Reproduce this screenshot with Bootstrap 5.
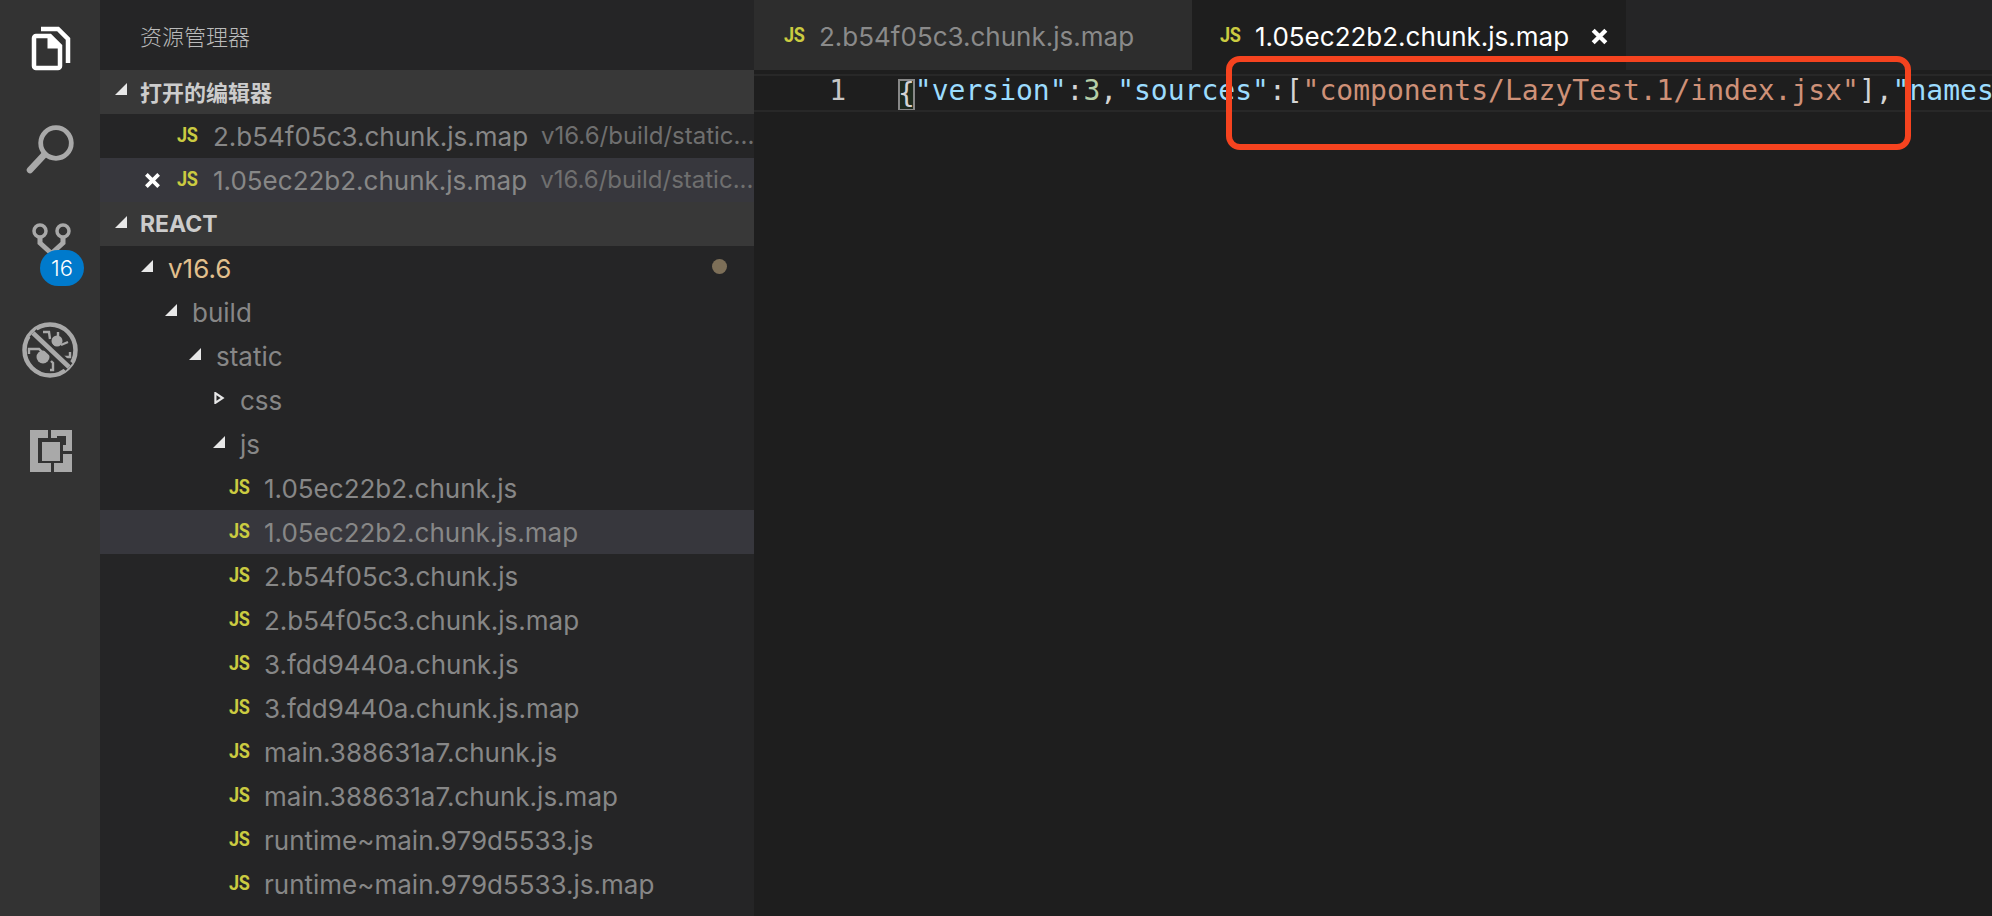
<!DOCTYPE html>
<html lang="zh">
<head>
<meta charset="utf-8">
<link href="https://cdn.jsdelivr.net/npm/bootstrap@5.3.0/dist/css/bootstrap.min.css" rel="stylesheet">
<style>
html,body{height:100%;overflow:hidden;background:#1e1e1e;}
body{font-family:Inter,"Noto Sans CJK SC",sans-serif;}
.vs-root{height:916px;width:1992px;position:relative;overflow:hidden;}
.vs-activity{width:100px;background:#333333;flex:none;}
.vs-activity-item{height:100px;position:relative;}
.vs-badge{left:40px;top:50px;width:44px;height:36px;background:#007acc;font-size:22px;font-weight:300;}
.vs-side{width:654px;background:#252526;flex:none;color:#878787;font-size:26px;overflow:hidden;}
.vs-title{height:70px;padding-left:40px;font-size:22px;color:#bbbbbb;font-family:"Noto Sans CJK SC",sans-serif;font-weight:300;}
.vs-section{height:44px;background:#383838;color:#cccccc;font-weight:700;font-size:22px;padding-left:15px;}
.vs-section-en{font-size:23px;}
.vs-section .vs-tw{margin-right:13px;}
.vs-zh{font-family:"Noto Sans CJK SC",sans-serif;padding-bottom:2px;}
.vs-row{height:44px;white-space:nowrap;}
.vs-sel{background:#37373d;}
.vs-tw{width:12px;height:12px;flex:none;display:block;margin-top:-4px;}
.vs-js{color:#cbcb41;font-family:"Roboto",sans-serif;font-weight:700;font-size:21px;letter-spacing:-.5px;width:21px;margin-right:14px;flex:none;transform:scaleX(.86);transform-origin:left center;}
.vs-open{padding-left:77px;}
.vs-open .vs-js{margin-right:15px;}
.vs-close{width:17px;height:17px;margin-left:-33px;margin-right:16px;flex:none;}
.vs-tab-x{width:19px;height:19px;margin-left:21px;flex:none;}
.vs-desc{font-size:24px;color:#6f6f6f;margin-left:13px;}
.vs-folder .vs-tw{margin-right:15px;}
.vs-dot{width:15px;height:15px;border-radius:50%;background:#7d6f58;margin-left:auto;margin-right:27px;margin-top:-3px;}
.vs-main{flex:1 1 auto;min-width:0;}
.vs-tabs{height:70px;background:#252526;}
.vs-tab{height:70px;font-size:26px;color:#8a8a8a;white-space:nowrap;padding-left:30px;background:#2d2d2d;padding-top:2px;}
.vs-tab-a{background:#1e1e1e;color:#ffffff;padding-left:28px;}
.vs-tab-i{width:438px;}
.vs-tab-a{width:434px;}
.vs-editor{background:#1e1e1e;height:846px;padding-top:4px;}
.vs-line{height:38px;border-top:2px solid #282828;border-bottom:2px solid #282828;font-family:"DejaVu Sans Mono",monospace;font-size:28px;white-space:nowrap;overflow:hidden;line-height:30px;}
.vs-num{width:145px;flex:none;color:#c6c6c6;padding-right:53px;text-align:right;}
.vs-code{color:#d4d4d4;position:relative;margin-left:-1px;}
.vs-k{color:#9cdcfe;}.vs-n{color:#b5cea8;}.vs-s{color:#ce9178;}
.vs-brace{outline:2px solid #888888;outline-offset:-2px;display:inline-block;height:32px;line-height:30px;vertical-align:top;margin-top:3px;background:#1e2a1e;}
.vs-mark{position:absolute;left:1226px;top:56px;width:685px;height:94px;border:6px solid #f6431f;border-radius:14px;pointer-events:none;}
</style>
</head>
<body>
<div class="vs-root d-flex">
  <nav class="vs-activity d-flex flex-column">
    <div class="vs-activity-item">
      <svg width="100" height="100" viewBox="0 0 100 100" fill="none" stroke="#fff" stroke-width="4.5"><path d="M41 29H58L68 39V63"/><path d="M36 36H50L60 46V66a2 2 0 0 1-2 2H36a2 2 0 0 1-2-2V38a2 2 0 0 1 2-2z"/><path d="M50 37 59 47H50z" fill="#fff" stroke="none"/><path d="M49 36v11h11" stroke-width="3"/></svg>
    </div>
    <div class="vs-activity-item">
      <svg width="100" height="100" viewBox="0 100 100 100" fill="none" stroke="#a9a9a9"><circle cx="56" cy="143" r="15.3" stroke-width="4.8"/><path d="M44 155 30 170" stroke-width="6.5" stroke-linecap="round"/></svg>
    </div>
    <div class="vs-activity-item">
      <svg width="100" height="100" viewBox="0 200 100 100" fill="none" stroke="#a9a9a9"><circle cx="40" cy="231" r="6" stroke-width="3.5"/><circle cx="63" cy="231" r="6" stroke-width="3.5"/><path d="M40 238v5l11 10M63 238v5l-11 10" stroke-width="5"/></svg>
      <span class="position-absolute d-flex align-items-center justify-content-center text-white rounded-pill vs-badge">16</span>
    </div>
    <div class="vs-activity-item">
      <svg width="100" height="100" viewBox="0 300 100 100" fill="none" stroke="#a9a9a9"><circle cx="50" cy="350" r="25.5" stroke-width="4.5"/><circle cx="43" cy="357" r="6.5" fill="#a9a9a9" stroke="none"/><circle cx="57" cy="341" r="5.5" fill="#a9a9a9" stroke="none"/><path d="M43 332h6l1 7M58 332v6M68 342l-7 3M29 354v-5h10l3 3M70 352v5h-8M50 370h3v-7l-2-2" stroke-width="2.4"/><path d="M33 333 69 367" stroke="#333" stroke-width="10"/><path d="M33 333 69 367" stroke-width="4.5"/></svg>
    </div>
    <div class="vs-activity-item">
      <svg width="100" height="100" viewBox="0 400 100 100" fill="#a9a9a9"><path d="M30 430H48V438H38V463H51V472H30ZM54 463H63V454H72V472H54ZM51 430H72V451H63V445H66V436H57V438H51Z"/><rect x="42" y="442" width="18" height="19"/></svg>
    </div>
  </nav>
  <aside class="vs-side d-flex flex-column">
    <div class="vs-title d-flex align-items-center">资源管理器</div>
    <div class="vs-section d-flex align-items-center vs-zh"><svg class="vs-tw" viewBox="0 0 10 10"><path d="M0 10 10 0V10Z" fill="#e8e8e8"/></svg>打开的编辑器</div>
    <div class="vs-row vs-open d-flex align-items-center"><span class="vs-js">JS</span>2.b54f05c3.chunk.js.map<span class="vs-desc">v16.6/build/static...</span></div>
    <div class="vs-row vs-open vs-sel d-flex align-items-center"><svg class="vs-close" viewBox="0 0 18 18"><path d="M2.5 2.5l13 13M15.5 2.5l-13 13" stroke="#fff" stroke-width="4"/></svg><span class="vs-js">JS</span>1.05ec22b2.chunk.js.map<span class="vs-desc">v16.6/build/static...</span></div>
    <div class="vs-section vs-section-en d-flex align-items-center"><svg class="vs-tw" viewBox="0 0 10 10"><path d="M0 10 10 0V10Z" fill="#e8e8e8"/></svg>REACT</div>
    <div class="vs-row vs-folder d-flex align-items-center" style="padding-left:41px;color:#e2c08d"><svg class="vs-tw" viewBox="0 0 10 10"><path d="M0 10 10 0V10Z" fill="#e8e8e8"/></svg>v16.6<span class="vs-dot"></span></div>
    <div class="vs-row vs-folder d-flex align-items-center" style="padding-left:65px"><svg class="vs-tw" viewBox="0 0 10 10"><path d="M0 10 10 0V10Z" fill="#e8e8e8"/></svg>build</div>
    <div class="vs-row vs-folder d-flex align-items-center" style="padding-left:89px"><svg class="vs-tw" viewBox="0 0 10 10"><path d="M0 10 10 0V10Z" fill="#e8e8e8"/></svg>static</div>
    <div class="vs-row vs-folder d-flex align-items-center" style="padding-left:113px"><svg class="vs-tw" viewBox="0 0 10 10"><path d="M2 1 8 5 2 9Z" fill="#252526" stroke="#e8e8e8" stroke-width="1.8"/></svg>css</div>
    <div class="vs-row vs-folder d-flex align-items-center" style="padding-left:113px"><svg class="vs-tw" viewBox="0 0 10 10"><path d="M0 10 10 0V10Z" fill="#e8e8e8"/></svg>js</div>
    <div class="vs-row d-flex align-items-center" style="padding-left:129px"><span class="vs-js">JS</span>1.05ec22b2.chunk.js</div>
    <div class="vs-row vs-sel d-flex align-items-center" style="padding-left:129px"><span class="vs-js">JS</span>1.05ec22b2.chunk.js.map</div>
    <div class="vs-row d-flex align-items-center" style="padding-left:129px"><span class="vs-js">JS</span>2.b54f05c3.chunk.js</div>
    <div class="vs-row d-flex align-items-center" style="padding-left:129px"><span class="vs-js">JS</span>2.b54f05c3.chunk.js.map</div>
    <div class="vs-row d-flex align-items-center" style="padding-left:129px"><span class="vs-js">JS</span>3.fdd9440a.chunk.js</div>
    <div class="vs-row d-flex align-items-center" style="padding-left:129px"><span class="vs-js">JS</span>3.fdd9440a.chunk.js.map</div>
    <div class="vs-row d-flex align-items-center" style="padding-left:129px"><span class="vs-js">JS</span>main.388631a7.chunk.js</div>
    <div class="vs-row d-flex align-items-center" style="padding-left:129px"><span class="vs-js">JS</span>main.388631a7.chunk.js.map</div>
    <div class="vs-row d-flex align-items-center" style="padding-left:129px"><span class="vs-js">JS</span>runtime~main.979d5533.js</div>
    <div class="vs-row d-flex align-items-center" style="padding-left:129px"><span class="vs-js">JS</span>runtime~main.979d5533.js.map</div>
  </aside>
  <main class="vs-main d-flex flex-column">
    <div class="vs-tabs d-flex">
      <div class="vs-tab vs-tab-i d-flex align-items-center"><span class="vs-js">JS</span>2.b54f05c3.chunk.js.map</div>
      <div class="vs-tab vs-tab-a d-flex align-items-center"><span class="vs-js">JS</span>1.05ec22b2.chunk.js.map<svg class="vs-tab-x" viewBox="0 0 18 18"><path d="M3 3l12 12M15 3 3 15" stroke="#fff" stroke-width="4"/></svg></div>
    </div>
    <div class="vs-editor">
      <div class="vs-line d-flex"><span class="vs-num">1</span><span class="vs-code"><span class="vs-brace">{</span><span class="vs-k">"version"</span>:<span class="vs-n">3</span>,<span class="vs-k">"sources"</span>:[<span class="vs-s">"components/LazyTest.1/index.jsx"</span>],<span class="vs-k">"names</span></span></div>
    </div>
  </main>
  <div class="vs-mark"></div>
</div>
<script src="https://cdn.jsdelivr.net/npm/bootstrap@5.3.0/dist/js/bootstrap.bundle.min.js"></script>
</body>
</html>
